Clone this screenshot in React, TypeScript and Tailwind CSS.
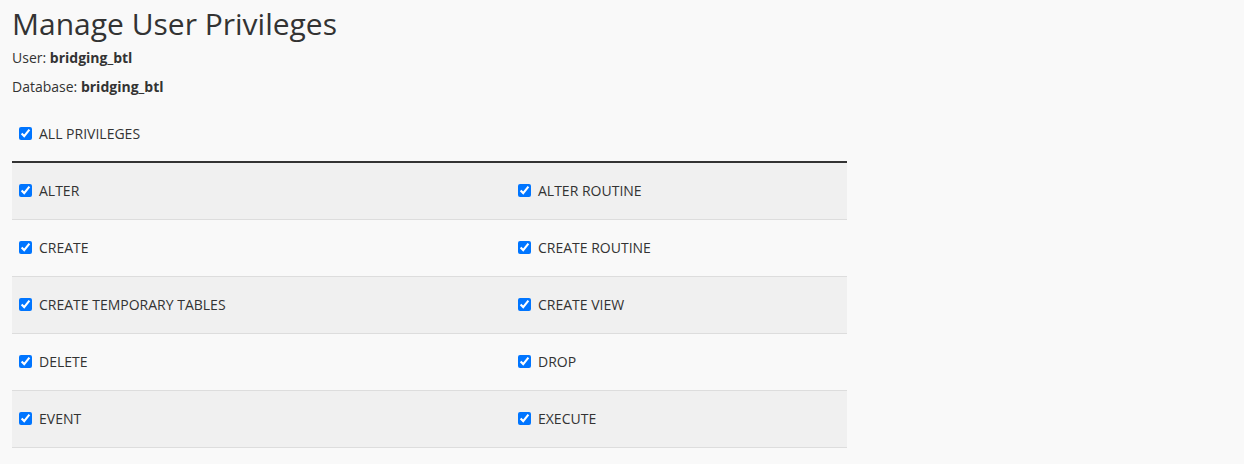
import React from "react";

const rows: [string, string][] = [
  ["ALTER", "ALTER ROUTINE"],
  ["CREATE", "CREATE ROUTINE"],
  ["CREATE TEMPORARY TABLES", "CREATE VIEW"],
  ["DELETE", "DROP"],
  ["EVENT", "EXECUTE"],
];

function Check({ label }: { label: string }) {
  return (
    <label className="flex items-center gap-[7px]">
      <input
        type="checkbox"
        checked
        readOnly
        className="m-0 h-[13px] w-[13px] accent-[#0075ff]"
      />
      <span>{label}</span>
    </label>
  );
}

export default function App() {
  return (
    <div
      className="min-h-[464px] w-[1244px] bg-[#f9f9f9] text-[#333] text-[14px]"
      style={{ fontFamily: '"Open Sans", "Liberation Sans", sans-serif' }}
    >
      <div className="px-[12px]">
        <h1 className="pt-[2px] text-[30px] leading-[44px] font-normal text-[#333]">
          Manage User Privileges
        </h1>
        <p className="mt-[2px] leading-[20px]">
          User: <b className="font-bold">bridging_btl</b>
        </p>
        <p className="mt-[9px] leading-[20px]">
          Database: <b className="font-bold">bridging_btl</b>
        </p>
        <div className="mt-[26px] pl-[7px] h-[20px] flex items-center">
          <Check label="ALL PRIVILEGES" />
        </div>
        <div className="mt-[18px] w-[835px] border-t-2 border-[#333]">
          {rows.map(([a, b], i) => (
            <div
              key={a}
              className={`grid grid-cols-[499px_1fr] h-[57px] pb-[2px] border-b border-[#ddd] ${
                i % 2 === 0 ? "bg-[#f0f0f0]" : "bg-[#f9f9f9]"
              }`}
            >
              <div className="pl-[7px] flex items-center">
                <Check label={a} />
              </div>
              <div className="pl-[7px] flex items-center">
                <Check label={b} />
              </div>
            </div>
          ))}
        </div>
      </div>
    </div>
  );
}
